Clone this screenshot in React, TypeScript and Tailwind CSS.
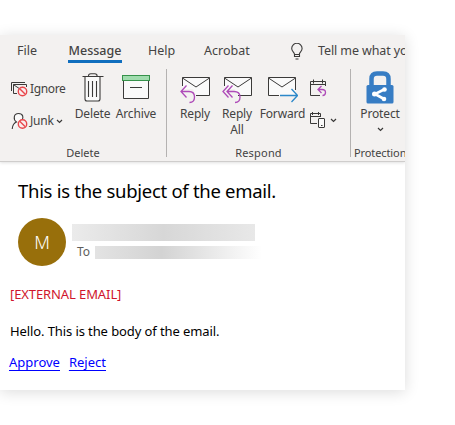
import React from "react";

const ink = "#3b3a39";

function Blocked({ x, y }: { x: number; y: number }) {
  return (
    <g fill="#f9eeee" stroke="#e8474c" strokeWidth="1.4">
      <circle cx={x} cy={y} r="4.2" />
      <path d={`M${x - 2.8} ${y - 2.8}l5.6 5.6`} />
    </g>
  );
}

function IgnoreIcon() {
  return (
    <svg className="shrink-0" width="17" height="16" viewBox="0 0 17 16" fill="none" stroke={ink}>
      <path d="M0.5 10V1.5H14M2.5 12V3.5H15.5V6" />
      <path d="M6 12.500H2.500V3.500M3 4l6 4 3-2" />
      <Blocked x={11.5} y={10.5} />
    </svg>
  );
}

function JunkIcon() {
  return (
    <svg className="shrink-0" width="17" height="18" viewBox="0 0 17 18" fill="none" stroke={ink} strokeWidth="1.1">
      <path d="M1.200 17C1.500 13 3 11 5.500 10C2 7.500 2.500 1.500 7.500 1.500C12.500 1.500 12.500 6 11 8" fill="#fafafa" />
      <Blocked x={11.5} y={12} />
    </svg>
  );
}

function TrashIcon() {
  return (
    <svg width="22" height="29" viewBox="0 0 22 29" fill="none" stroke={ink} strokeWidth="1.1">
      <path d="M3 4v22q0 2 2 2h11q2 0 2-2V4" fill="#fafafa" />
      <path d="M0.500 3.500h21M6.500 3q0-2.300 2.300-2.300h4q2.300 0 2.300 2.300M6.500 8v16M10.500 8v16M14.500 8v16" />
    </svg>
  );
}

function ArchiveIcon() {
  return (
    <svg width="28" height="25" viewBox="0 0 28 25" fill="none">
      <path d="M1.500 6v17.500h25V6" fill="#fafafa" stroke={ink} />
      <path d="M8 12.500h12" stroke={ink} />
      <rect x="0.500" y="0.500" width="27" height="5" fill="#a0dcae" stroke="#36924b" />
    </svg>
  );
}

function MailIcon({ kind }: { kind: "reply" | "all" | "forward" }) {
  return (
    <svg width="31" height="28" viewBox="0 0 31 28" fill="none">
      <path d={kind === "forward" ? "M1.500 1.500h27v18h-27z" : "M2.500 1.500h27v18H16L13 13H2.500z"} fill="#fafafa" />
      {kind === "forward" ? (
        <>
          <path d="M12 19.500H1.500v-18h27V14M1.500 2l13.500 9L28.500 2" stroke={ink} />
          <path d="M13 19.500h17M24.500 13l6 6.500-6 6.500" stroke="#2b88c9" strokeWidth="1.300" />
        </>
      ) : (
        <>
          <path d="M2.500 10V1.500h27v18H16M2.500 2L16 11l13.500-9" stroke={ink} />
          <path
            d={kind === "all" ? "M6.500 9.500L1 15.500l5.500 6M10.500 9.500L5 15.500l5.500 6M5 15.500h7q6 0 6 5.500T13 26.500" : "M6.500 9.500L1 15.500l5.500 6M1 15.500h8q5.500 0 5.500 5.500T9.500 26.500"}
            stroke="#ae4bb8"
            strokeWidth="1.300"
          />
        </>
      )}
    </svg>
  );
}

function CalendarReplyIcon() {
  return (
    <svg width="17" height="18" viewBox="0 0 17 18" fill="none">
      <path d="M10 16.500H0.500v-14h15V7M0.500 5.500h15M3.500 0.500v4M12.500 0.500v4" stroke={ink} />
      <path d="M11.500 7L8 10.500l3.500 3.500M8 10.500h4q3.500 0 3.500 3t-3 3" stroke="#ae4bb8" strokeWidth="1.300" />
    </svg>
  );
}

function CalendarPhoneIcon() {
  return (
    <svg width="16" height="17" viewBox="0 0 16 17" fill="none" stroke={ink}>
      <path d="M7 11.500H0.500v-10h10V5M0.500 4.500h10M2.500 0v3M8.500 0v3" />
      <rect x="8.500" y="6.500" width="6" height="9" rx=".5" fill="#fafafa" />
      <path d="M11 13.500h1.500" />
    </svg>
  );
}

function ProtectIcon() {
  return (
    <svg width="28" height="33" viewBox="0 0 28 33" fill="none">
      <path d="M5.500 15V8q0-5.500 5.500-5.500h6q5.500 0 5.500 5.500V15" stroke="#377dc4" strokeWidth="4.500" />
      <rect x="0.500" y="14" width="27" height="18.500" rx="1.500" fill="#377dc4" />
      <path d="M19 18L9 23l9 5" stroke="#fff" strokeWidth="2.600" />
      <circle cx="18.500" cy="18.500" r="2.300" fill="#fff" />
      <circle cx="8.500" cy="23" r="2.500" fill="#fff" />
      <circle cx="18" cy="28" r="2.300" fill="#fff" />
    </svg>
  );
}

function BulbIcon() {
  return (
    <svg width="12" height="17" viewBox="0 0 12 17" fill="none" stroke={ink} strokeWidth="1.100">
      <path d="M3.500 11.500C3.500 9 0.700 8.500 0.700 5.500a5.200 5.200 0 0 1 10.400 0C11.100 8.500 8.300 9 8.300 11.500zM3.500 11.500v2h5v-2M4.500 16h3" />
    </svg>
  );
}

function Chevron() {
  return (
    <svg width="7" height="5" viewBox="0 0 7 5" fill="none" stroke={ink} strokeWidth="1.200">
      <path d="M1 1l2.500 2.500L6 1" />
    </svg>
  );
}

function BigButton({ icon, label, width, top }: { icon: React.ReactNode; label: string; width: string; top: string }) {
  return (
    <div className={`flex shrink-0 flex-col items-center ${width}`}>
      <div className={`h-[37px] ${top}`}>{icon}</div>
      <div className="whitespace-pre text-center leading-4 tracking-[-0.150px]">{label}</div>
    </div>
  );
}

export default function App() {
  return (
    <div className="h-[425px] w-[455px] overflow-hidden bg-white pt-[35px] font-['Noto_Sans',sans-serif]">
      <div className="h-[355px] w-[405px] shadow-[0_2px_14px_rgba(0,0,0,0.14)]">
        <div className="h-full overflow-hidden bg-white">
          <header className="h-[127px] border-b border-[#cfcdcc] bg-[#f3f1f0] text-[12px] text-[#444342] shadow-[0_1px_3px_rgba(0,0,0,0.12)]">
            <nav className="flex h-[34px] whitespace-nowrap pl-[17px] pt-[6px] text-[12.500px] leading-[19px]">
              <span className="w-[51px] shrink-0">File</span>
              <span className="h-[22px] w-[54px] shrink-0 border-b-[3px] border-[#106ebe] text-center font-medium">Message</span>
              <span className="w-[82px] shrink-0 pl-[26px]">Help</span>
              <span className="w-[87px] shrink-0">Acrobat</span>
              <span className="w-[27px] shrink-0 pt-[2px]"><BulbIcon /></span>
              <span className="shrink-0 tracking-[-0.100px]">Tell me what you</span>
            </nav>
            <div className="flex h-[92px]">
              <section className="h-[88px] w-[167px] shrink-0 border-r border-[#b4b2b1]">
                <div className="flex h-[75px]">
                  <div className="w-[70px] shrink-0 pl-[11px] pt-[11px]">
                    <div className="flex h-[18px] items-center gap-[2px] tracking-[-0.350px]"><IgnoreIcon />Ignore</div>
                    <div className="mt-[14px] flex h-[18px] items-center gap-[2px] tracking-[-0.200px]"><JunkIcon />Junk<Chevron /></div>
                  </div>
                  <BigButton icon={<TrashIcon />} label="Delete" width="w-[45px]" top="pt-[4px]" />
                  <BigButton icon={<ArchiveIcon />} label="Archive" width="w-[42px]" top="pt-[6px]" />
                </div>
                <div className="text-center text-[11px] leading-[18px]">Delete</div>
              </section>
              <section className="h-[88px] w-[184px] shrink-0 border-r border-[#b4b2b1]">
                <div className="flex h-[75px] pl-[7px]">
                  <BigButton icon={<MailIcon kind="reply" />} label="Reply" width="w-[42px]" top="pt-[7px]" />
                  <BigButton icon={<MailIcon kind="all" />} label={"Reply\nAll"} width="w-[42px]" top="pt-[7px]" />
                  <BigButton icon={<MailIcon kind="forward" />} label="Forward" width="w-[49px]" top="pt-[7px]" />
                  <div className="pl-[3px] pt-[10px]">
                    <CalendarReplyIcon />
                    <div className="mt-[15px] flex items-center gap-[4px]"><CalendarPhoneIcon /><Chevron /></div>
                  </div>
                </div>
                <div className="text-center text-[11px] leading-[18px] tracking-[0.200px]">Respond</div>
              </section>
              <section className="w-[54px] overflow-hidden whitespace-nowrap">
                <div className="flex h-[75px] flex-col items-center pl-[4px]">
                  <div className="h-[37px] pt-[2px]"><ProtectIcon /></div>
                  <span className="leading-4 tracking-[-0.150px]">Protect</span>
                  <span className="pt-[5px]"><Chevron /></span>
                </div>
                <div className="pl-[3px] text-[11px] leading-[18px] tracking-[-0.100px]">Protection</div>
              </section>
            </div>
          </header>
          <main>
            <h1 className="h-[56px] pl-[18px] pt-[16px] text-[18.500px] leading-[26px] tracking-[-0.290px] text-black">This is the subject of the email.</h1>
            <div className="flex h-[48px] pl-[18px]">
              <div className="flex size-12 items-center justify-center rounded-full bg-[#986f0b] text-[18px] font-light text-white">M</div>
              <div className="pl-[6px] pt-[6px]">
                <div className="h-[17px] w-[183px] bg-linear-to-r from-[#ebebeb] via-[#d7d7d7] to-[#e8e8e8]" />
                <div className="flex items-center pl-[5px] pt-[3px] text-[12px] leading-4 text-[#605e5c]">
                  <span className="w-[18px]">To</span>
                  <div className="h-[13px] w-[167px] bg-linear-to-r from-[#e3e3e3] via-[#d3d3d3] via-40% to-white" />
                </div>
              </div>
            </div>
            <p className="mt-[18px] pl-[10px] text-[13px] leading-5 tracking-[-0.100px] text-[#d0142c]">[EXTERNAL EMAIL]</p>
            <p className="mt-[17px] pl-[10px] text-[13px] leading-5 tracking-[-0.100px] text-black">Hello. This is the body of the email.</p>
            <div className="mt-[11px] flex gap-[9px] pl-[9px] text-[13px] leading-5 text-[#0000ff] underline underline-offset-[3px]">
              <a>Approve</a><a>Reject</a>
            </div>
          </main>
        </div>
      </div>
    </div>
  );
}
